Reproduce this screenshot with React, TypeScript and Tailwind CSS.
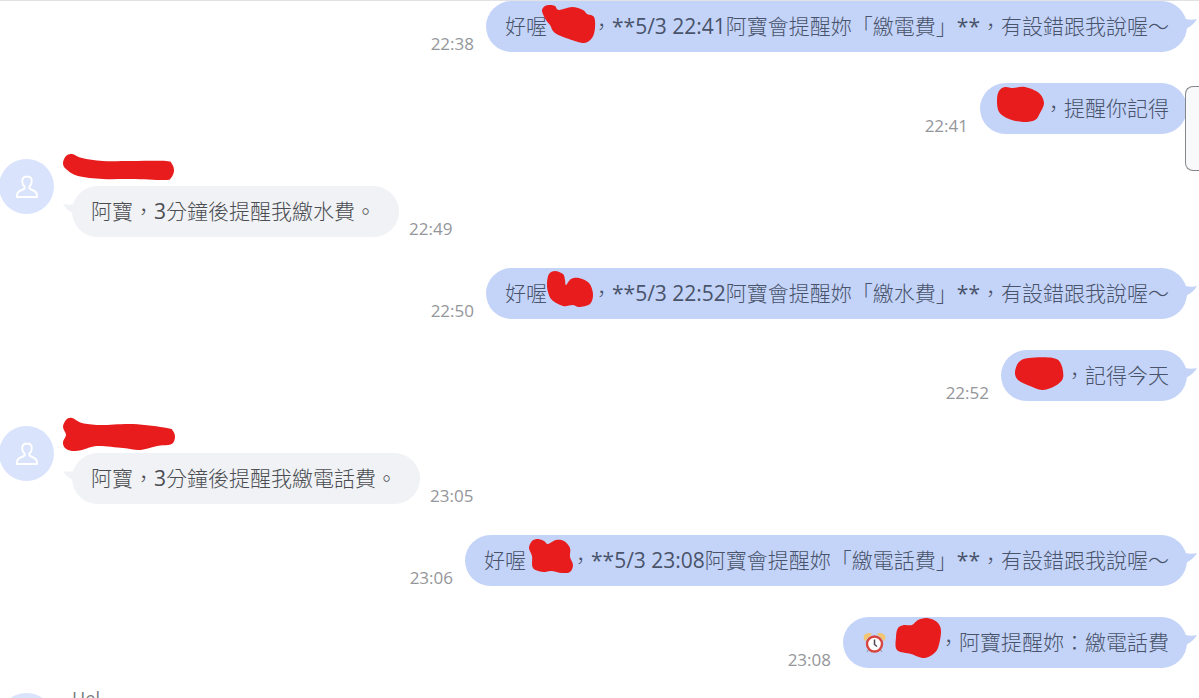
import type { ReactNode } from "react";

type Point = [number, number];

/** Smooth closed outline running through every point. */
function outline(points: Point[]): string {
  const n = points.length;
  const at = (i: number) => points[(i + n) % n];
  let d = `M${points[0][0]} ${points[0][1]}`;
  for (let i = 0; i < n; i++) {
    const [a, b, c, e] = [at(i - 1), at(i), at(i + 1), at(i + 2)];
    d += `C${b[0] + (c[0] - a[0]) / 6} ${b[1] + (c[1] - a[1]) / 6} ${c[0] - (e[0] - b[0]) / 6} ${c[1] - (e[1] - b[1]) / 6} ${c[0]} ${c[1]}`;
  }
  return d + "Z";
}

function Scribble({ points }: { points: Point[] }) {
  return (
    <span className="relative block h-[51px] w-[44px] shrink-0">
      <svg className="absolute top-0 -left-[10px] h-[51px] w-[64px] overflow-visible" viewBox="0 0 64 51" aria-hidden="true">
        <path d={outline(points)} fill="#e81c1d" />
      </svg>
    </span>
  );
}

function NameScribble({ points }: { points: Point[] }) {
  return (
    <span className="relative block h-[22px]">
      <svg className="absolute top-0 -left-[10px] h-[32px] w-[116px] overflow-visible" viewBox="0 0 116 32" aria-hidden="true">
        <path d={outline(points)} fill="#e81c1d" />
      </svg>
    </span>
  );
}

function AlarmClock() {
  return (
    <svg className="mr-[7px] h-[22px] w-[25px] shrink-0" viewBox="0 0 25 22" role="img" aria-label="alarm clock">
      <path d="M3 8C1 4 4 1 9 2Z" fill="#f2c572" stroke="#f2c572" strokeWidth="1.5" strokeLinejoin="round" />
      <path d="M22 8C24 4 21 1 16 2Z" fill="#f2c572" stroke="#f2c572" strokeWidth="1.5" strokeLinejoin="round" />
      <path d="M7 17l-2 3M18 17l2 3" stroke="#9aa0ad" strokeWidth="1.2" />
      <circle cx="12.5" cy="12" r="7.5" fill="#fff" stroke="#d64540" strokeWidth="2.4" />
      <path d="M12.5 7.5V12.5L15 14.5" fill="none" stroke="#4b4650" strokeWidth="1.5" />
    </svg>
  );
}

function Avatar() {
  return (
    <span className="mt-[6px] -ml-px flex size-[55px] shrink-0 items-center justify-center rounded-full bg-[#d9e3fc]">
      <svg className="size-[24px]" viewBox="0 0 24 24" fill="none" stroke="#fff" strokeWidth="1.9" strokeLinejoin="round" aria-hidden="true">
        <path d="M12 1.500c-3.200 0-4.800 2.100-4.800 4.800 0 2.200.9 4 2.400 5.200.5 1.600-.2 2.500-1.600 3-3.500 1.200-6 2.500-6 5.500v2h20v-2c0-3-2.500-4.300-6-5.500-1.400-.5-2.100-1.400-1.600-3 1.500-1.200 2.400-3 2.400-5.200 0-2.700-1.600-4.800-4.800-4.800Z" />
      </svg>
    </span>
  );
}

function Time({ value }: { value: string }) {
  return <time className="text-[17px] leading-[16px] font-normal text-[#94969a]">{value}</time>;
}

function Latin({ children }: { children: ReactNode }) {
  return <span className="font-normal">{children}</span>;
}

function Outgoing({ time, children }: { time: string; children: ReactNode }) {
  return (
    <li className="mb-[31px] flex items-end justify-end gap-[12px] pr-[12px]">
      <Time value={time} />
      <p className="relative flex h-[51px] items-center rounded-full bg-[#c4d4f9] pr-[18px] pl-[19px] text-[21px] whitespace-pre text-[#49536a]">
        {children}
        <svg className="absolute top-[17px] -right-[10px] h-[11px] w-[14px]" viewBox="0 0 14 11" aria-hidden="true">
          <path d="M0 0C4 2 9 2 14 1C12 5 8 8 3 11H0Z" fill="#c4d4f9" />
        </svg>
      </p>
    </li>
  );
}

function Incoming({ name, time, children }: { name: ReactNode; time?: string; children?: ReactNode }) {
  return (
    <li className="-mt-[12px] mb-[31px] flex items-start gap-[18px]">
      <Avatar />
      <div>
        <div className="mb-[11px] h-[22px] text-[18px] leading-[22px] font-normal text-[#777a80]">{name}</div>
        {children && (
          <div className="flex items-end gap-[10px]">
            <p className="relative flex h-[51px] items-center rounded-full bg-[#f0f2f5] pr-[23px] pl-[19px] text-[21px] font-light whitespace-pre text-[#4b4d52]">
              {children}
              <svg className="absolute top-[17px] -left-[9px] h-[11px] w-[14px]" viewBox="0 0 14 11" aria-hidden="true">
                <path d="M14 0C10 2 5 2 0 1C2 5 6 8 11 11H14Z" fill="#f0f2f5" />
              </svg>
            </p>
            {time && <Time value={time} />}
          </div>
        )}
      </div>
    </li>
  );
}

export default function App() {
  return (
    <main className="relative h-screen overflow-hidden border-t border-[#e1e2e4] bg-white font-['Open_Sans','Noto_Sans_CJK_TC',sans-serif] font-light">
      <ul className="flex flex-col">
        <Outgoing time="22:38">
          <span>好喔</span>
          <Scribble points={[[5, 10], [8, 5], [13, 4], [18, 5], [22, 9], [35, 6], [46, 9], [50, 13], [57, 16], [58, 27], [55, 37], [47, 42], [32, 38], [18, 32], [13, 24], [9, 19]]} />
          <span>，<Latin>**5/3 22:41</Latin>阿寶會提醒妳「繳電費」<Latin>**</Latin>，有設錯跟我說喔～</span>
        </Outgoing>
        <Outgoing time="22:41">
          <Scribble points={[[8, 17], [10, 8], [16, 4], [24, 5], [36, 4], [50, 10], [55, 20], [51, 30], [46, 37], [34, 39], [20, 36], [10, 29]]} />
          <span>，提醒你記得</span>
        </Outgoing>
        <Incoming
          time="22:49"
          name={<NameScribble points={[[1, 10], [4, 3], [10, 1], [20, 5], [41, 8], [70, 8], [104, 8], [110, 11], [112, 18], [109, 25], [103, 27], [70, 26], [41, 26], [16, 23], [4, 16]]} />}
        >
          <span>阿寶，<Latin>3</Latin>分鐘後提醒我繳水費。</span>
        </Incoming>
        <Outgoing time="22:50">
          <span>好喔</span>
          <Scribble points={[[10, 15], [12, 6], [18, 3], [26, 6], [28, 12], [29, 17], [34, 11], [42, 10], [52, 15], [56, 26], [53, 36], [42, 39], [36, 37], [26, 38], [15, 32], [11, 24]]} />
          <span>，<Latin>**5/3 22:52</Latin>阿寶會提醒妳「繳水費」<Latin>**</Latin>，有設錯跟我說喔～</span>
        </Outgoing>
        <Outgoing time="22:52">
          <Scribble points={[[5, 22], [9, 12], [19, 8], [43, 8], [51, 14], [53, 28], [45, 36], [32, 40], [20, 36], [8, 30]]} />
          <span>，記得今天</span>
        </Outgoing>
        <Incoming
          time="23:05"
          name={
            <NameScribble
              points={[[1, 7], [4, 0], [10, -2], [20, 3], [38, 5], [71, 4], [105, 8], [111, 11], [113, 17], [111, 23], [106, 25], [95, 26], [78, 30], [61, 28], [35, 26], [20, 30], [10, 31], [3, 28], [1, 22], [4, 15]]}
            />
          }
        >
          <span>阿寶，<Latin>3</Latin>分鐘後提醒我繳電話費。</span>
        </Incoming>
        <Outgoing time="23:06">
          <span>好喔</span>
          <Scribble points={[[13, 13], [16, 6], [22, 4], [28, 6], [32, 9], [40, 5], [48, 6], [54, 13], [54, 22], [57, 30], [54, 37], [46, 38], [35, 36], [27, 37], [17, 33], [16, 21]]} />
          <span>，<Latin>**5/3 23:08</Latin>阿寶會提醒妳「繳電話費」<Latin>**</Latin>，有設錯跟我說喔～</span>
        </Outgoing>
        <Outgoing time="23:08">
          <AlarmClock />
          <Scribble points={[[12, 20], [14, 11], [20, 8], [28, 8], [34, 3], [43, 1], [53, 5], [57, 14], [54, 31], [48, 38], [41, 41], [35, 40], [27, 37], [13, 33]]} />
          <span>，阿寶提醒妳：繳電話費</span>
        </Outgoing>
        <Incoming name="Hel" />
      </ul>
      <aside className="absolute top-[85px] right-0 h-[85px] w-[14px] rounded-l-lg border border-r-0 border-[#85878b] bg-[#f8f9fb]" />
    </main>
  );
}
